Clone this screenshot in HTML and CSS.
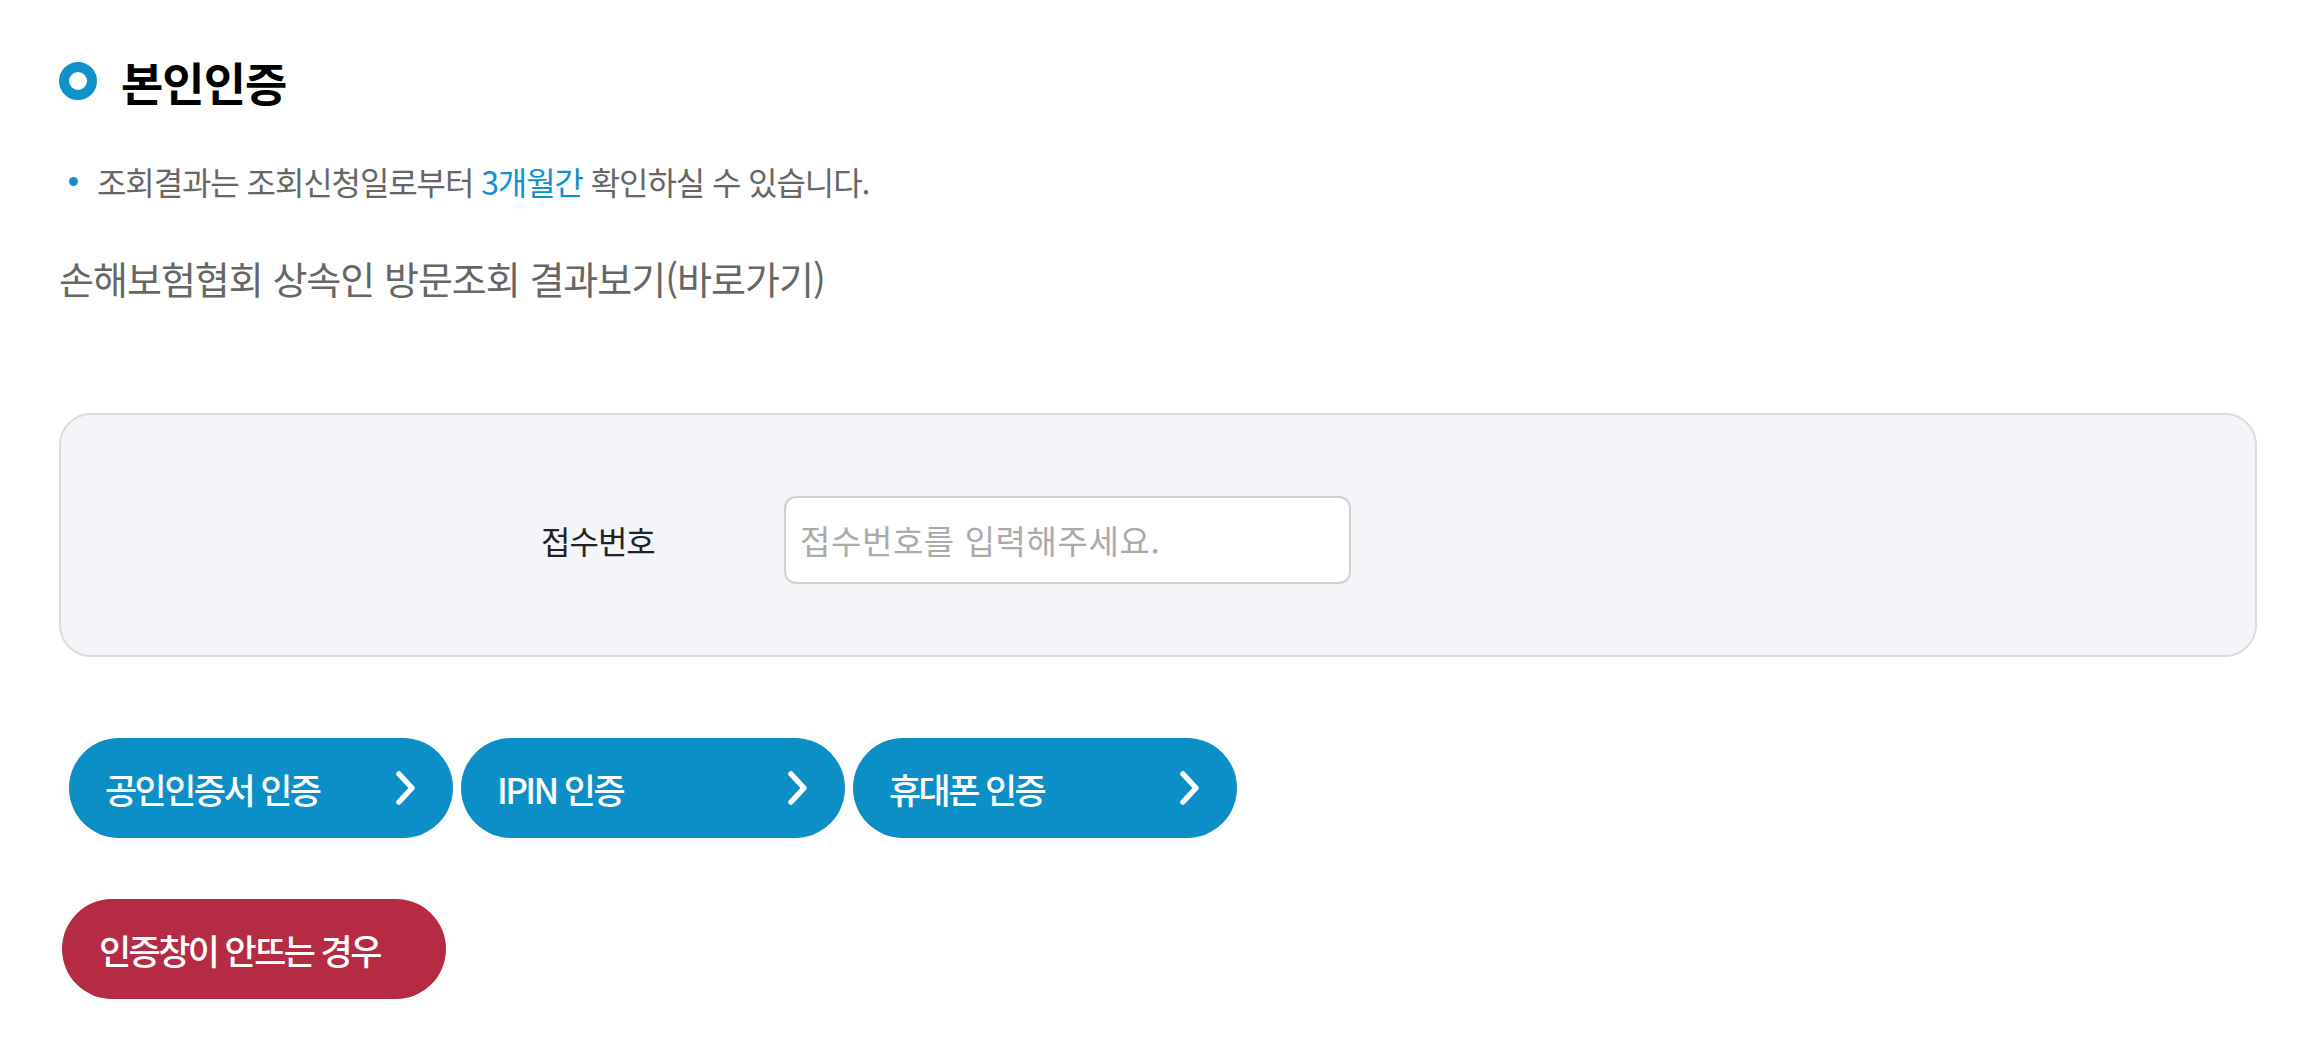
FILE: index.html
```html
<!DOCTYPE html>
<html lang="ko">
<head>
<meta charset="utf-8">
<title>본인인증</title>
<link rel="stylesheet" href="styles.css">
</head>
<body>
<div class="wrap">
  <h2 class="title"><span class="ring"></span>본인인증</h2>
  <ul class="notes">
    <li>조회결과는 조회신청일로부터&nbsp;<em>3개월간</em>&nbsp;확인하실 수 있습니다.</li>
  </ul>
  <p class="link">손해보험협회 상속인 방문조회 결과보기(바로가기)</p>

  <div class="form-box">
    <label class="label" for="rcpt">접수번호</label>
    <input class="field" id="rcpt" type="text" placeholder="접수번호를 입력해주세요.">
  </div>

  <div class="btn-row">
    <a class="btn btn-blue" href="#"><span>공인인증서 인증</span><svg class="chev" viewBox="0 0 22 36" width="22" height="36"><polyline points="4,4 17,18 4,32" /></svg></a>
    <a class="btn btn-blue" href="#"><span>IPIN 인증</span><svg class="chev" viewBox="0 0 22 36" width="22" height="36"><polyline points="4,4 17,18 4,32" /></svg></a>
    <a class="btn btn-blue" href="#"><span>휴대폰 인증</span><svg class="chev" viewBox="0 0 22 36" width="22" height="36"><polyline points="4,4 17,18 4,32" /></svg></a>
  </div>
  <div class="btn-row2">
    <a class="btn btn-red" href="#"><span>인증창이 안뜨는 경우</span></a>
  </div>
</div>
</body>
</html>
```

FILE: styles.css
```css
html, body {
  margin: 0;
  padding: 0;
  background: #ffffff;
}

body {
  font-family: "Noto Sans CJK KR", "Noto Sans", sans-serif;
  color: #222;
}

.wrap {
  padding: 61px 55px 0 59px;
}

.title {
  display: flex;
  align-items: center;
  gap: 24px;
  margin: 0;
  height: 40px;
  font-size: 46px;
  font-weight: 700;
  line-height: 40px;
  letter-spacing: -1px;
  color: #000;
}

.ring {
  width: 38px;
  height: 38px;
  box-sizing: border-box;
  border: 10px solid #1191c9;
  border-radius: 50%;
  flex: none;
}

.notes {
  list-style: none;
  margin: 60px 0 0 0;
  padding: 0;
}

.notes li {
  display: flex;
  align-items: center;
  font-size: 32px;
  line-height: 40px;
  letter-spacing: -1.1px;
  color: #666;
}

.notes li::before {
  content: "";
  width: 9px;
  height: 9px;
  border-radius: 50%;
  background: #1191c9;
  margin: 0 19px 0 10px;
  flex: none;
}

.notes em {
  font-style: normal;
  color: #1191c9;
}

.link {
  margin: 52px 0 0 0;
  font-size: 38px;
  line-height: 50px;
  letter-spacing: -1px;
  color: #666;
}

.form-box {
  display: flex;
  align-items: center;
  margin-top: 110px;
  padding: 81px 0 71px 480px;
  background: #f4f5f9;
  border: 2px solid #dcdcdc;
  border-radius: 32px;
}

.label {
  width: 243px;
  font-size: 32px;
  letter-spacing: -1px;
  color: #222;
}

.field {
  box-sizing: border-box;
  width: 567px;
  height: 88px;
  padding: 0 14px;
  border: 2px solid #cfcfcf;
  border-radius: 12px;
  background: #fff;
  font-family: "Noto Sans CJK KR", "Noto Sans", sans-serif;
  font-size: 33px;
  letter-spacing: 0.6px;
  color: #333;
  outline: none;
}

.field::placeholder {
  color: #aaaaaa;
}

.btn-row {
  display: flex;
  gap: 8px;
  margin: 81px 0 0 10px;
}

.btn-row2 {
  display: flex;
  margin: 61px 0 0 3px;
}

.btn {
  display: flex;
  align-items: center;
  justify-content: space-between;
  box-sizing: border-box;
  width: 384px;
  height: 100px;
  padding: 0 36px 0 36px;
  border-radius: 50px;
  color: #fff;
  text-decoration: none;
  font-size: 35px;
  font-weight: 500;
  letter-spacing: -2.6px;
}

.btn-blue {
  background: #0c8fc6;
}

.btn-red {
  background: #b52b43;
  padding-left: 37px;
}

.chev {
  flex: none;
}

.chev polyline {
  fill: none;
  stroke: #fff;
  stroke-width: 5.5;
  stroke-linecap: round;
  stroke-linejoin: round;
}
```
